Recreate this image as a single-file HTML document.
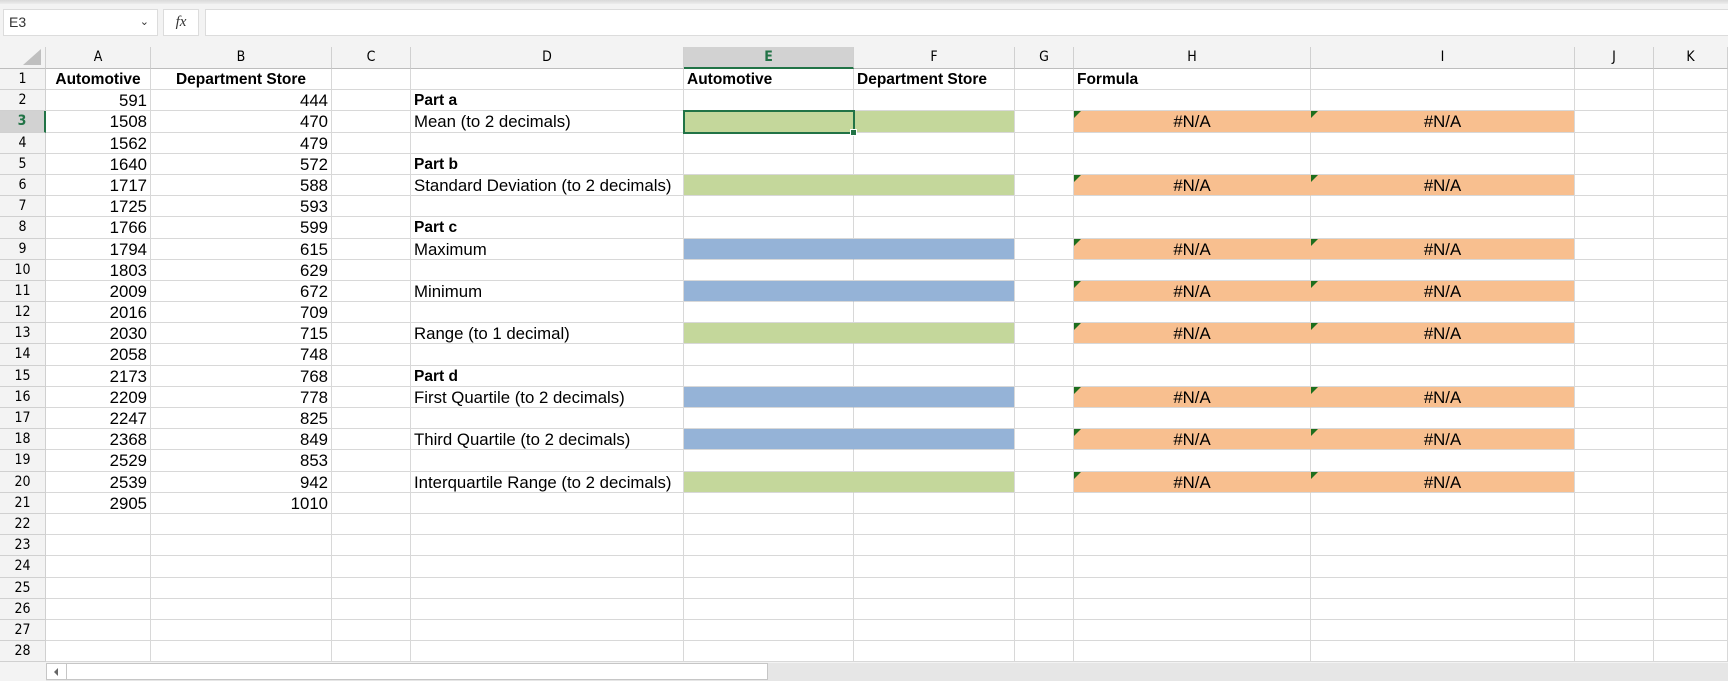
<!DOCTYPE html>
<html><head><meta charset="utf-8">
<style>
*{box-sizing:border-box;margin:0;padding:0}
body{width:1728px;height:681px;overflow:hidden;background:#f3f3f3;font-family:"Liberation Sans",Arial,sans-serif;position:relative}
.top{position:absolute;left:0;top:0;width:1728px;height:4px;background:linear-gradient(#d9d9d9,#ececec)}
.nb{position:absolute;top:9px;height:27px;background:#fff;border:1px solid #dcdcdc;font-size:14px;color:#333;line-height:25px}
.grid{position:absolute;left:0;top:47px;display:grid;grid-template-columns:46px 105px 181px 79px 273px 170px 161px 59px 237px 264px 79px 74px;grid-template-rows:22px repeat(28,21.2px);background:#fff}
.grid>div{border-right:1px solid #d8d8d8;border-bottom:1px solid #d8d8d8;font-size:16.8px;line-height:22px;white-space:nowrap;overflow:visible;padding:0 3px;color:#000;position:relative}
.h{background:#f3f3f3;color:#666;text-align:center;font-family:"DejaVu Sans Condensed","Liberation Sans",sans-serif;font-size:14px!important;line-height:21px!important;border-color:#d0d0d0!important;border-bottom-color:#bdbdbd!important}
.r{background:#f3f3f3;color:#555;text-align:center;font-family:"DejaVu Sans Condensed","Liberation Sans",sans-serif;font-size:14px!important;line-height:21px!important;border-color:#d0d0d0!important}
.b{font-weight:bold;font-size:15.5px!important}.c{text-align:center}.n{text-align:right}
.g{background:#c4d79b}.bl{background:#95b3d7}.o{background:#f8bf8f;text-align:center}
.ge{background:#c4d79b;border-right-color:#c4d79b!important}
.ble{background:#95b3d7;border-right-color:#95b3d7!important}
.oh{background:#f8bf8f;text-align:center;border-right-color:#f8bf8f!important}
.o::before,.oh::before{content:"";position:absolute;left:0;top:0;border-top:7px solid #1d6e1d;border-right:7px solid transparent}
.sel{outline:2px solid #217346;outline-offset:-1px;z-index:2}
.sel::after{content:"";position:absolute;right:-4px;bottom:-4px;width:5px;height:5px;background:#217346;border:1px solid #fff}
</style></head><body>
<div class="top"></div>
<div class="nb" style="left:3px;width:155px;padding-left:5px">E3<span style="position:absolute;right:8px;top:0;font-size:11px">&#8964;</span></div>
<div class="nb" style="left:163px;width:36px;text-align:center;font-family:'Liberation Serif',serif;font-style:italic;font-size:15px">fx</div>
<div class="nb" style="left:205px;width:1523px;border-right:none"></div>
<div class="grid">
<div class="h" style="position:relative"><span style="position:absolute;right:4px;bottom:3px;border-left:18px solid transparent;border-bottom:16px solid #bfbfbf"></span></div><div class="h">A</div><div class="h">B</div><div class="h">C</div><div class="h">D</div><div class="h" style="background:#d2d2d2;color:#217346;font-weight:bold;border-bottom:2px solid #217346!important;border-bottom-color:#217346!important">E</div><div class="h">F</div><div class="h">G</div><div class="h">H</div><div class="h">I</div><div class="h">J</div><div class="h">K</div>
<div class="r">1</div><div class="b c">Automotive</div><div class="b c">Department Store</div><div></div><div></div><div class="b">Automotive</div><div class="b">Department Store</div><div></div><div class="b">Formula</div><div></div><div></div><div></div>
<div class="r">2</div><div class="n">591</div><div class="n">444</div><div></div><div class="b">Part a</div><div></div><div></div><div></div><div></div><div></div><div></div><div></div>
<div class="r" style="background:#d2d2d2;color:#217346;font-weight:bold;border-right:2px solid #217346!important">3</div><div class="n">1508</div><div class="n">470</div><div></div><div>Mean (to 2 decimals)</div><div class="g sel"></div><div class="g"></div><div></div><div class="oh">#N/A</div><div class="o">#N/A</div><div></div><div></div>
<div class="r">4</div><div class="n">1562</div><div class="n">479</div><div></div><div></div><div></div><div></div><div></div><div></div><div></div><div></div><div></div>
<div class="r">5</div><div class="n">1640</div><div class="n">572</div><div></div><div class="b">Part b</div><div></div><div></div><div></div><div></div><div></div><div></div><div></div>
<div class="r">6</div><div class="n">1717</div><div class="n">588</div><div></div><div>Standard Deviation (to 2 decimals)</div><div class="ge"></div><div class="g"></div><div></div><div class="oh">#N/A</div><div class="o">#N/A</div><div></div><div></div>
<div class="r">7</div><div class="n">1725</div><div class="n">593</div><div></div><div></div><div></div><div></div><div></div><div></div><div></div><div></div><div></div>
<div class="r">8</div><div class="n">1766</div><div class="n">599</div><div></div><div class="b">Part c</div><div></div><div></div><div></div><div></div><div></div><div></div><div></div>
<div class="r">9</div><div class="n">1794</div><div class="n">615</div><div></div><div>Maximum</div><div class="ble"></div><div class="bl"></div><div></div><div class="oh">#N/A</div><div class="o">#N/A</div><div></div><div></div>
<div class="r">10</div><div class="n">1803</div><div class="n">629</div><div></div><div></div><div></div><div></div><div></div><div></div><div></div><div></div><div></div>
<div class="r">11</div><div class="n">2009</div><div class="n">672</div><div></div><div>Minimum</div><div class="ble"></div><div class="bl"></div><div></div><div class="oh">#N/A</div><div class="o">#N/A</div><div></div><div></div>
<div class="r">12</div><div class="n">2016</div><div class="n">709</div><div></div><div></div><div></div><div></div><div></div><div></div><div></div><div></div><div></div>
<div class="r">13</div><div class="n">2030</div><div class="n">715</div><div></div><div>Range (to 1 decimal)</div><div class="ge"></div><div class="g"></div><div></div><div class="oh">#N/A</div><div class="o">#N/A</div><div></div><div></div>
<div class="r">14</div><div class="n">2058</div><div class="n">748</div><div></div><div></div><div></div><div></div><div></div><div></div><div></div><div></div><div></div>
<div class="r">15</div><div class="n">2173</div><div class="n">768</div><div></div><div class="b">Part d</div><div></div><div></div><div></div><div></div><div></div><div></div><div></div>
<div class="r">16</div><div class="n">2209</div><div class="n">778</div><div></div><div>First Quartile (to 2 decimals)</div><div class="ble"></div><div class="bl"></div><div></div><div class="oh">#N/A</div><div class="o">#N/A</div><div></div><div></div>
<div class="r">17</div><div class="n">2247</div><div class="n">825</div><div></div><div></div><div></div><div></div><div></div><div></div><div></div><div></div><div></div>
<div class="r">18</div><div class="n">2368</div><div class="n">849</div><div></div><div>Third Quartile (to 2 decimals)</div><div class="ble"></div><div class="bl"></div><div></div><div class="oh">#N/A</div><div class="o">#N/A</div><div></div><div></div>
<div class="r">19</div><div class="n">2529</div><div class="n">853</div><div></div><div></div><div></div><div></div><div></div><div></div><div></div><div></div><div></div>
<div class="r">20</div><div class="n">2539</div><div class="n">942</div><div></div><div>Interquartile Range (to 2 decimals)</div><div class="ge"></div><div class="g"></div><div></div><div class="oh">#N/A</div><div class="o">#N/A</div><div></div><div></div>
<div class="r">21</div><div class="n">2905</div><div class="n">1010</div><div></div><div></div><div></div><div></div><div></div><div></div><div></div><div></div><div></div>
<div class="r">22</div><div></div><div></div><div></div><div></div><div></div><div></div><div></div><div></div><div></div><div></div><div></div>
<div class="r">23</div><div></div><div></div><div></div><div></div><div></div><div></div><div></div><div></div><div></div><div></div><div></div>
<div class="r">24</div><div></div><div></div><div></div><div></div><div></div><div></div><div></div><div></div><div></div><div></div><div></div>
<div class="r">25</div><div></div><div></div><div></div><div></div><div></div><div></div><div></div><div></div><div></div><div></div><div></div>
<div class="r">26</div><div></div><div></div><div></div><div></div><div></div><div></div><div></div><div></div><div></div><div></div><div></div>
<div class="r">27</div><div></div><div></div><div></div><div></div><div></div><div></div><div></div><div></div><div></div><div></div><div></div>
<div class="r">28</div><div></div><div></div><div></div><div></div><div></div><div></div><div></div><div></div><div></div><div></div><div></div>
</div>
<div style="position:absolute;left:46px;top:663px;width:1682px;height:18px;background:#e6e6e6"></div>
<div style="position:absolute;left:46px;top:663px;width:722px;height:17px;background:#fff;border:1px solid #c6c6c6"><div style="position:absolute;left:0;top:0;width:20px;height:15px;border-right:1px solid #c6c6c6"><span style="position:absolute;left:7px;top:4px;border-right:4px solid #666;border-top:4px solid transparent;border-bottom:4px solid transparent"></span></div></div>
</body></html>
